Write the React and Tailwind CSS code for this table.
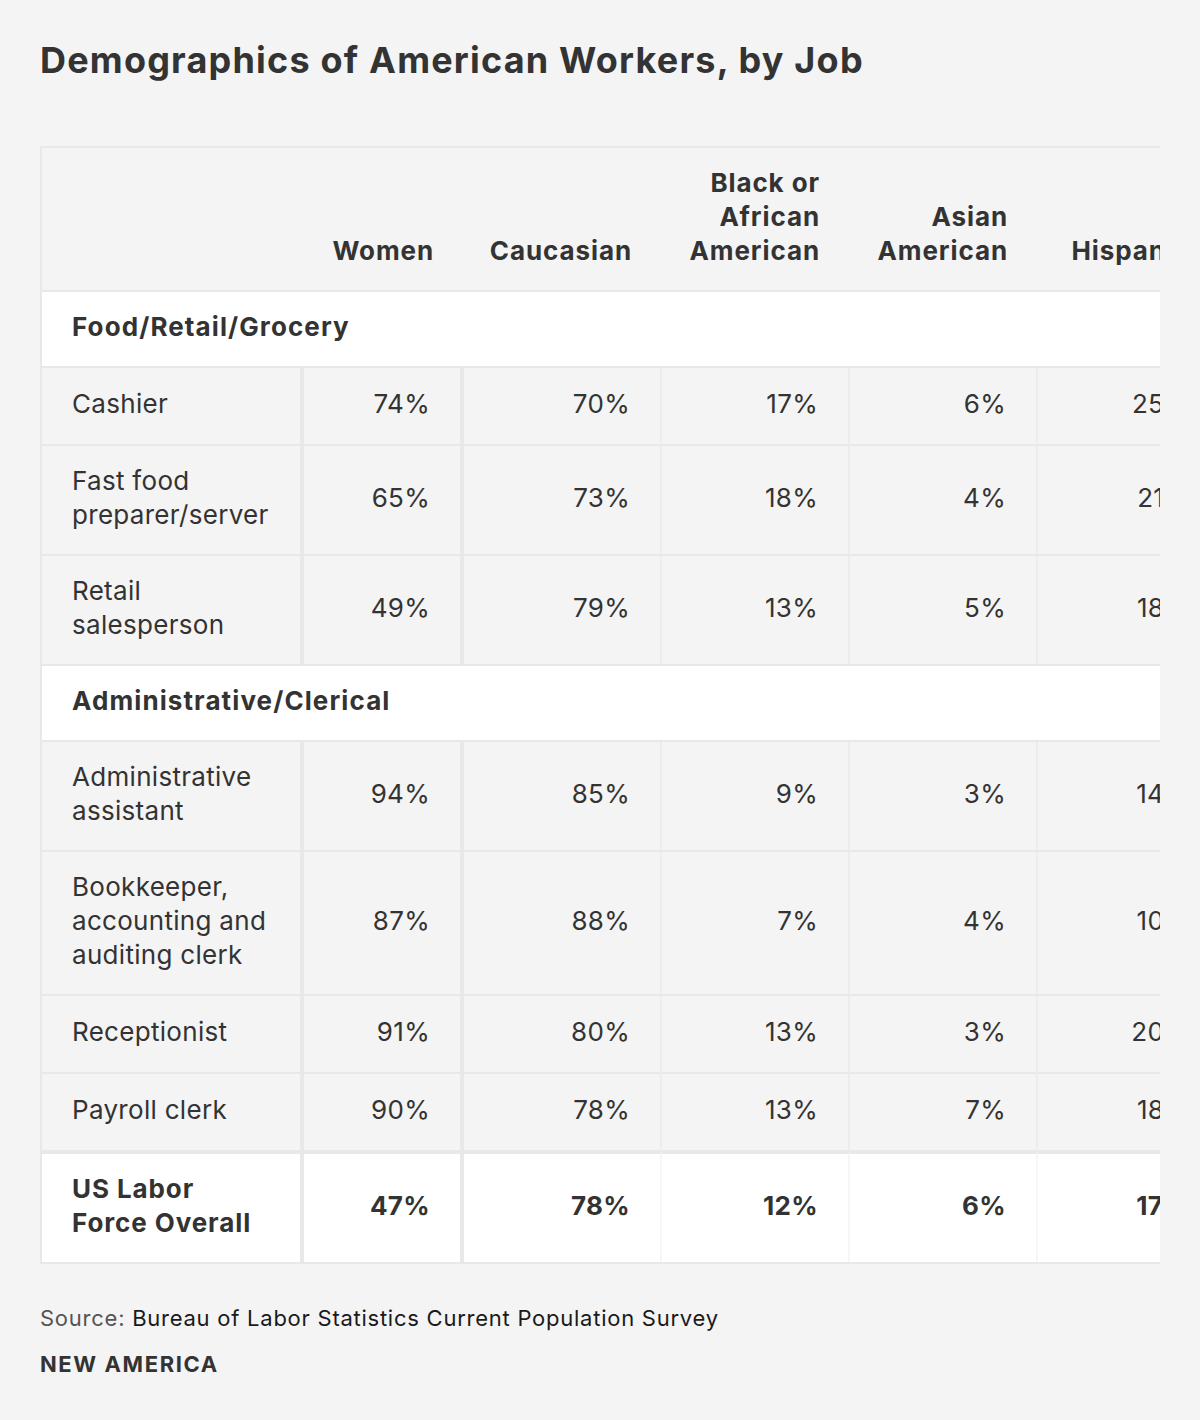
import React from 'react';

const sections = [
    {
        title: 'Food/Retail/Grocery',
        rows: [
            { label: ['Cashier'], values: ['74%', '70%', '17%', '6%', '25%'] },
            { label: ['Fast food', 'preparer/server'], values: ['65%', '73%', '18%', '4%', '21%'] },
            { label: ['Retail', 'salesperson'], values: ['49%', '79%', '13%', '5%', '18%'] },
        ],
    },
    {
        title: 'Administrative/Clerical',
        rows: [
            { label: ['Administrative', 'assistant'], values: ['94%', '85%', '9%', '3%', '14%'] },
            { label: ['Bookkeeper,', 'accounting and', 'auditing clerk'], values: ['87%', '88%', '7%', '4%', '10%'] },
            { label: ['Receptionist'], values: ['91%', '80%', '13%', '3%', '20%'] },
            { label: ['Payroll clerk'], values: ['90%', '78%', '13%', '7%', '18%'] },
        ],
    },
];

const headers = [['Women'], ['Caucasian'], ['Black or', 'African', 'American'], ['Asian', 'American'], ['Hispanic']];

const Lines = ({ lines }) => lines.map((l, i) => (
    <React.Fragment key={i}>
        {i > 0 && <br />}
        {l}
    </React.Fragment>
));

// vertical divider per column: first two are heavier
const divider = (i, light) => i < 2
    ? 'border-r-4 border-r-[#e8e8e8]'
    : `border-r-2 ${light ? 'border-r-[#f6f6f6]' : 'border-r-[#ececec]'}`;

const App = () => {
    return (
        <div className="min-h-[1420px] w-[1200px] bg-[#f4f4f4] text-[#333] font-['Inter',sans-serif] px-10 pt-[38px]">
            <h1 className="text-[36px] leading-[44px] font-bold tracking-[1.2px]">
                Demographics of American Workers, by Job
            </h1>

            <div className="mt-[64px] w-[1120px] overflow-hidden">
                <table className="table-fixed w-[1180px] border-separate border-spacing-0 border-l-2 border-t-2 border-b-2 border-[#e8e8e8] text-[26px] leading-[34px] tracking-[0.3px]">
                    <colgroup>
                        <col className="w-[262px]" />
                        <col className="w-[160px]" />
                        <col className="w-[198px]" />
                        <col className="w-[188px]" />
                        <col className="w-[188px]" />
                        <col className="w-[182px]" />
                    </colgroup>
                    <thead>
                        <tr>
                            <th className="border-b-2 border-[#e8e8e8] bg-[#f4f4f4]" />
                            {headers.map((h, i) => (
                                <th
                                    key={i}
                                    className="align-bottom text-right font-bold tracking-[0.9px] whitespace-nowrap pt-[18px] pb-[22px] pr-[30px] pl-2 border-b-2 border-[#e8e8e8] bg-[#f4f4f4]"
                                >
                                    <Lines lines={h} />
                                </th>
                            ))}
                        </tr>
                    </thead>
                    <tbody>
                        {sections.map((s) => (
                            <React.Fragment key={s.title}>
                                <tr>
                                    <td colSpan={6} className="bg-white font-bold tracking-[1.1px] pt-[18px] pb-[22px] pl-[30px] border-b-2 border-[#e8e8e8]">
                                        {s.title}
                                    </td>
                                </tr>
                                {s.rows.map((r, ri) => (
                                    <tr key={ri} className="bg-[#f4f4f4]">
                                        <td className={`pt-[18px] pb-[22px] pl-[30px] pr-2 whitespace-nowrap border-b-2 border-b-[#e8e8e8] ${divider(0)}`}>
                                            <Lines lines={r.label} />
                                        </td>
                                        {r.values.map((v, vi) => (
                                            <td
                                                key={vi}
                                                className={`pt-[18px] pb-[22px] pr-[30px] leading-[36px] text-right align-middle whitespace-nowrap border-b-2 border-b-[#e8e8e8] ${vi < 4 ? divider(vi + 1) : ''}`}
                                            >
                                                {v}
                                            </td>
                                        ))}
                                    </tr>
                                ))}
                            </React.Fragment>
                        ))}
                        <tr className="bg-white font-bold">
                            <td className={`pt-[18px] pb-[22px] pl-[30px] pr-2 tracking-[0.9px] whitespace-nowrap border-t-2 border-t-[#e8e8e8] ${divider(0)}`}>
                                <Lines lines={['US Labor', 'Force Overall']} />
                            </td>
                            {['47%', '78%', '12%', '6%', '17%'].map((v, vi) => (
                                <td
                                    key={vi}
                                    className={`pt-[18px] pb-[22px] pr-[30px] text-right whitespace-nowrap border-t-2 border-t-[#e8e8e8] ${vi < 4 ? divider(vi + 1, true) : ''}`}
                                >
                                    {v}
                                </td>
                            ))}
                        </tr>
                    </tbody>
                </table>
            </div>

            <p className="mt-[39px] text-[22px] leading-[30px] tracking-[0.75px]">
                <span className="text-[#555]">Source:</span>{' '}
                <span className="text-[#1a1a1a]">Bureau of Labor Statistics Current Population Survey</span>
            </p>
            <p className="mt-[16px] text-[22px] leading-[30px] font-bold tracking-[1.6px] text-[#333]">NEW AMERICA</p>
        </div>
    );
};

export default App;
